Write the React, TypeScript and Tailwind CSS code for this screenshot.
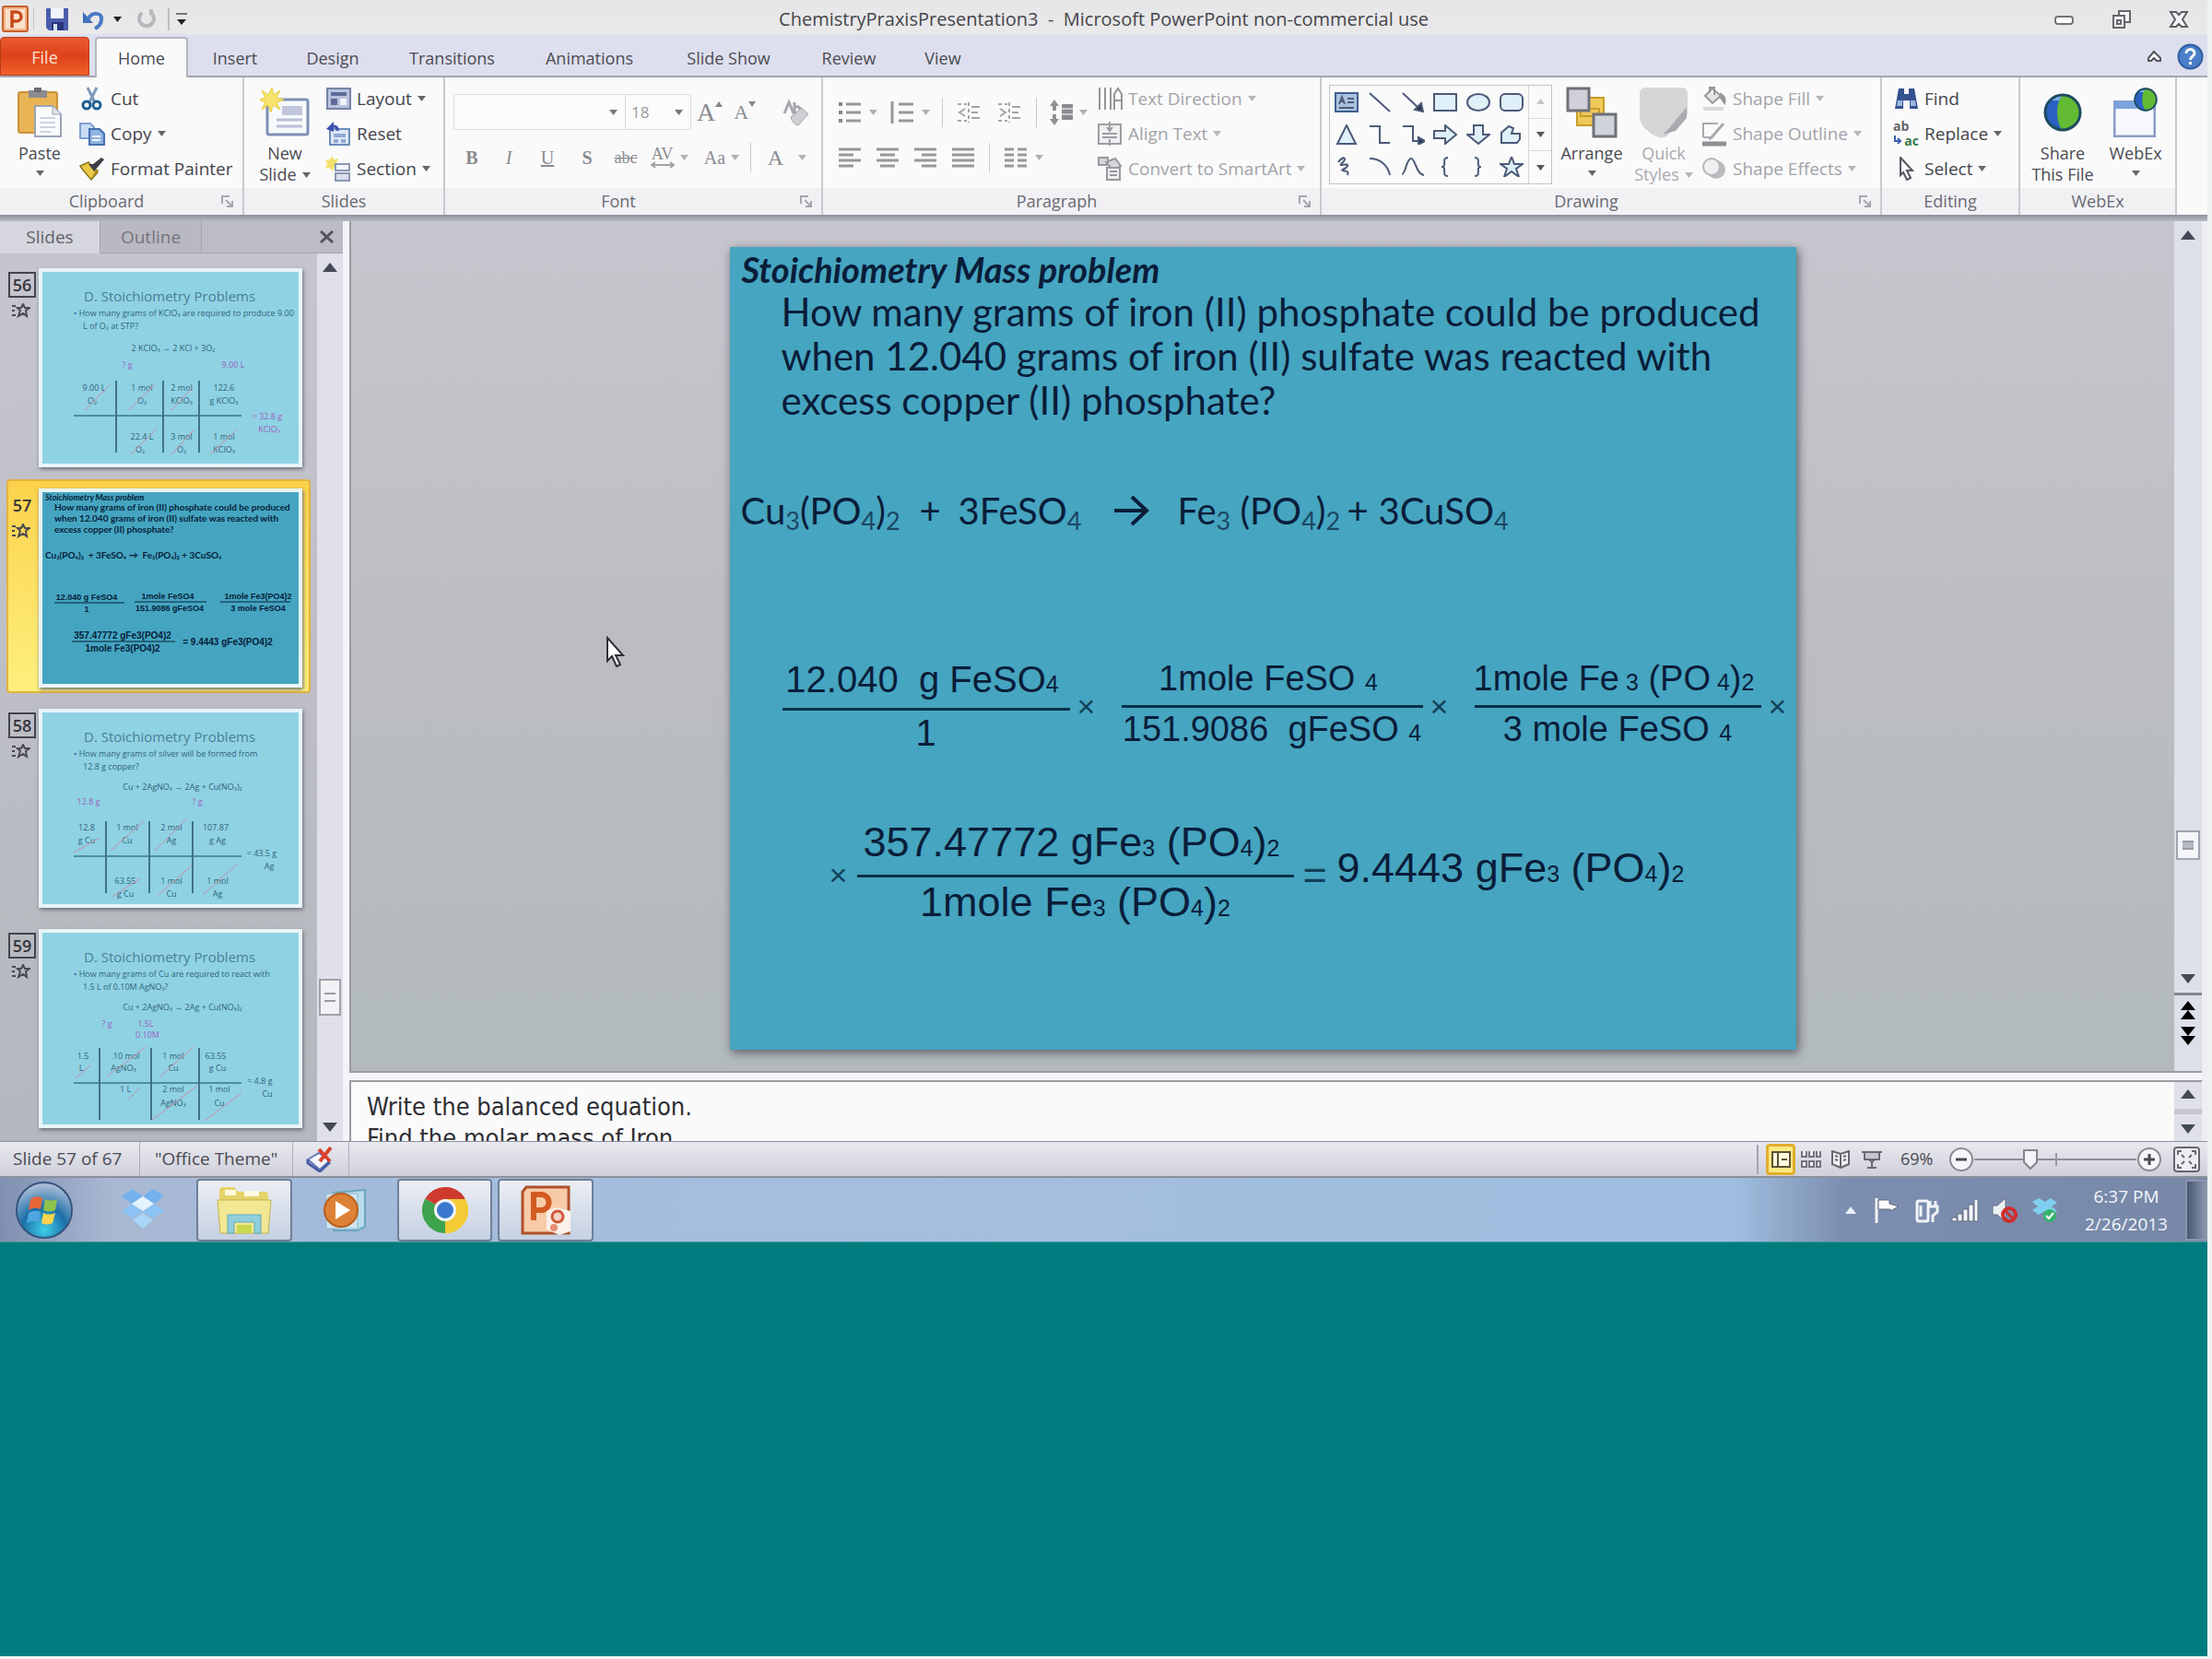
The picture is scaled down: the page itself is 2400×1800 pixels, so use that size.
import React from "react";

type Kids = { children?: React.ReactNode };

/* ---------- small shared pieces ---------- */

function Caret({ className = "text-[#555]" }: { className?: string }) {
  return (
    <svg width="9" height="6" viewBox="0 0 9 6" className={className} aria-hidden="true">
      <path d="M0 0h9L4.5 6z" fill="currentColor" />
    </svg>
  );
}

function Tri({ down = false, className = "text-[#444a55]" }: { down?: boolean; className?: string }) {
  return (
    <svg width="16" height="10" viewBox="0 0 16 10" className={className} aria-hidden="true">
      <path d={down ? "M0 0h16L8 10z" : "M0 10h16L8 0z"} fill="currentColor" />
    </svg>
  );
}

function Sep() {
  return <span className="h-8 w-px bg-[#c9c9cf]" />;
}

function Group({ label, width, children, launcher = false }: Kids & { label: string; width: string; launcher?: boolean }) {
  return (
    <section aria-label={label} className={`flex flex-col border-r-2 border-[#c9c9ce] ${width}`}>
      <div className="flex h-[120px] pt-1">{children}</div>
      <div className="flex h-[29px] items-center bg-[#f1f1f4]">
        <span className="flex-1 text-center text-[18px] text-[#6a6a72]">{label}</span>
        {launcher && (
          <button aria-label={`${label} options`} className="flex w-8 justify-center">
            <svg width="14" height="14" viewBox="0 0 14 14" fill="none" stroke="#a6a6ae" strokeWidth="2">
              <path d="M1 9V1h8M5 5l6 6M12 6v6H6" />
            </svg>
          </button>
        )}
      </div>
    </section>
  );
}

function SmallButton({ icon, label, caret = false, muted = false }: { icon: React.ReactNode; label: string; caret?: boolean; muted?: boolean }) {
  return (
    <button className={`flex h-[38px] items-center gap-1.5 whitespace-nowrap text-[19px] ${muted ? "text-[#a3a3a8]" : "text-[#45454b]"}`}>
      <span className="flex w-7 justify-center">{icon}</span>
      {label}
      {caret && <Caret className={muted ? "text-[#b5b5ba]" : "text-[#66666c]"} />}
    </button>
  );
}

function BigButton({ icon, lines, caret, width, muted = false }: { icon: React.ReactNode; lines: string[]; caret: "below" | "inline" | "none"; width: string; muted?: boolean }) {
  return (
    <button className={`flex flex-col items-center text-[18px] leading-[23px] ${width} ${muted ? "text-[#a9a9ae]" : "text-[#4b4b51]"}`}>
      <span className="flex h-[67px] items-center justify-center">{icon}</span>
      {lines.map((l, i) => (
        <span key={l} className="flex items-center gap-1.5 whitespace-nowrap">
          {l}
          {caret === "inline" && i === lines.length - 1 && <Caret className={muted ? "text-[#b5b5ba]" : "text-[#66666c]"} />}
        </span>
      ))}
      {caret === "below" && <span className="flex h-5 items-center"><Caret className="text-[#66666c]" /></span>}
    </button>
  );
}

/* ---------- title bar ---------- */

function TitleBar() {
  return (
    <header className="flex h-[37px] items-center bg-gradient-to-b from-[#e6e6e8] to-[#e9e9ea] pt-1">
      <div className="flex w-[228px] items-center pl-0.5 text-[#222]">
        <svg width="30" height="30" viewBox="0 0 30 30" aria-hidden="true">
          <rect x="1" y="1" width="27" height="27" rx="2" fill="#f3b48c" stroke="#c9602b" strokeWidth="2" />
          <rect x="4" y="4" width="21" height="21" fill="#fbe0cc" />
          <path d="M11 24V7h5a5 5 0 0 1 0 10h-5" fill="none" stroke="#c74a1c" strokeWidth="3.5" />
        </svg>
        <span className="ml-1 h-6 w-px bg-[#c4c4c8]" />
        <button aria-label="Save" className="ml-3">
          <svg width="26" height="26" viewBox="0 0 26 26">
            <path d="M1 1h24v24H4l-3-3z" fill="#4b5cab" />
            <rect x="6" y="1" width="14" height="11" fill="#eef3fb" />
            <rect x="7" y="16" width="13" height="9" fill="#28367c" />
            <rect x="9" y="18" width="4" height="7" fill="#d5e0f2" />
          </svg>
        </button>
        <button aria-label="Undo" className="ml-3.5">
          <svg width="26" height="24" viewBox="0 0 26 24" fill="none">
            <path d="M7 11C11 4 22 4 21 12c0 5-3 8-7 10" stroke="#4a79c4" strokeWidth="4" />
            <path d="M1 4v12h11z" fill="#3f6fbd" />
          </svg>
        </button>
        <button aria-label="Undo list" className="ml-2"><Caret className="text-[#222]" /></button>
        <button aria-label="Redo" className="ml-4">
          <svg width="22" height="24" viewBox="0 0 22 24" fill="none" stroke="#b9b9bd" strokeWidth="4">
            <path d="M6 5a8 8 0 1 0 10 0M16 1v6" />
          </svg>
        </button>
        <span className="ml-3 h-6 w-0.5 bg-[#bdbdc1]" />
        <button aria-label="Customize toolbar" className="ml-1.5">
          <svg width="14" height="16" viewBox="0 0 14 16"><path d="M1 2h12" stroke="#777" strokeWidth="2" /><path d="M2 8h10l-5 6z" fill="#222" /></svg>
        </button>
      </div>
      <h1 className="flex-1 whitespace-nowrap text-center text-[20px] leading-6 text-[#45454a]">
        ChemistryPraxisPresentation3&nbsp; -&nbsp; Microsoft PowerPoint non-commercial use
      </h1>
      <div className="flex w-[228px] items-center justify-end gap-10 pr-5">
        <button aria-label="Minimize">
          <svg width="22" height="12" viewBox="0 0 22 12"><rect x="1" y="3" width="19" height="8" rx="3" fill="#fff" stroke="#74747a" strokeWidth="2" /></svg>
        </button>
        <button aria-label="Restore">
          <svg width="22" height="22" viewBox="0 0 22 22" fill="#f4f4f6" stroke="#66666c" strokeWidth="2">
            <rect x="8" y="2" width="12" height="12" /><rect x="2" y="7" width="12" height="13" /><path d="M6 12h4v4H6z" />
          </svg>
        </button>
        <button aria-label="Close">
          <svg width="22" height="20" viewBox="0 0 22 20" fill="#f6f6f8" stroke="#5d5d64" strokeWidth="2">
            <path d="M2 2h6l3 3 3-3h6l-5 8 5 8h-6l-3-3-3 3H2l5-8z" />
          </svg>
        </button>
      </div>
    </header>
  );
}

/* ---------- ribbon tabs ---------- */

const tabs = [
  { t: "Insert", w: "w-[102px]" },
  { t: "Design", w: "w-[110px]" },
  { t: "Transitions", w: "w-[149px]" },
  { t: "Animations", w: "w-[149px]" },
  { t: "Slide Show", w: "w-[153px]" },
  { t: "Review", w: "w-[108px]" },
  { t: "View", w: "w-[96px]" },
];

function TabBar() {
  return (
    <nav className="flex h-[47px] items-end border-b-2 border-[#a3a6b0] bg-[#dedfee] text-[18px] text-[#4b4b52]">
      <button className="h-[42px] w-[97px] rounded-t-sm border border-[#b93a14] bg-gradient-to-b from-[#ea5a33] via-[#dd4118] to-[#f0602c] pt-0.5 text-[#ffe3d8]">File</button>
      <button className="-mb-0.5 ml-1.5 h-11 w-[101px] rounded-t border-2 border-b-0 border-[#b4b6c0] bg-[#fafafb]">Home</button>
      {tabs.map((x) => (
        <button key={x.t} className={`h-[42px] whitespace-nowrap pt-1 ${x.w}`}>{x.t}</button>
      ))}
      <span className="flex-1" />
      <div className="flex h-[42px] items-center gap-4 pr-1">
        <button aria-label="Collapse ribbon">
          <svg width="17" height="14" viewBox="0 0 17 14" fill="#fff" stroke="#55555c" strokeWidth="2"><path d="M2 9l6-7 7 7v3h-4l-3-3-3 3H2z" /></svg>
        </button>
        <button aria-label="Help">
          <svg width="29" height="29" viewBox="0 0 29 29">
            <circle cx="14.5" cy="14.5" r="13" fill="#4a7fc8" stroke="#2f5da0" strokeWidth="2" />
            <path d="M10 11c0-6 9-6 9 0 0 3-4.500 3-4.500 7M14.500 20v3" fill="none" stroke="#fff" strokeWidth="3" />
          </svg>
        </button>
      </div>
    </nav>
  );
}

/* ---------- ribbon icons ---------- */

const PasteIcon = () => (
  <svg width="48" height="54" viewBox="0 0 48 54">
    <rect x="1" y="5" width="42" height="44" rx="2" fill="#e9b454" stroke="#c9923a" strokeWidth="2" />
    <path d="M12 3h20v8H12z" fill="#8b8b90" /><path d="M18 0h8v5h-8z" fill="#6d6d73" />
    <path d="M19 20h19l9 9v24H19z" fill="#fafbfd" stroke="#9aa3b8" strokeWidth="2" />
    <path d="M38 20v9h9" fill="#dfe4ee" stroke="#9aa3b8" /><path d="M24 33h17M24 38h17M24 43h17M24 48h12" stroke="#cdd3df" strokeWidth="2" />
  </svg>
);
const CutIcon = () => (
  <svg width="24" height="26" viewBox="0 0 24 26" fill="none">
    <path d="M7 1l8 16M17 1L9 17" stroke="#7d9bb8" strokeWidth="3" />
    <circle cx="6" cy="20" r="4" stroke="#1d5f93" strokeWidth="3" /><circle cx="17" cy="20" r="4" stroke="#1d5f93" strokeWidth="3" />
  </svg>
);
const CopyIcon = () => (
  <svg width="28" height="26" viewBox="0 0 28 26">
    <path d="M1 2h11l4 4v12H1z" fill="#c9dcf3" stroke="#7da0cf" strokeWidth="2" />
    <path d="M11 8h11l5 5v12H11z" fill="#8fb4e2" stroke="#456fae" strokeWidth="2" /><path d="M14 16h9M14 20h9" stroke="#eef4fc" strokeWidth="2" />
  </svg>
);
const PainterIcon = () => (
  <svg width="28" height="26" viewBox="0 0 28 26">
    <path d="M1 10l9-4 10 11-7 8C9 20 4 15 1 10z" fill="#ecc945" stroke="#8b7a22" strokeWidth="1.500" />
    <path d="M10 8l6 8L27 3l-3-2-9 7z" fill="#3d3f46" /><path d="M13 24l8-9-2-2" fill="#a38315" />
  </svg>
);
const NewSlideIcon = () => (
  <svg width="54" height="54" viewBox="0 0 54 54">
    <rect x="8" y="13" width="44" height="38" rx="2" fill="#f7f9fd" stroke="#7f90b4" strokeWidth="3" />
    <path d="M24 20h22v10H24z" fill="#c0c7dc" /><path d="M18 35h28M18 42h28" stroke="#b8c0d6" strokeWidth="3" />
    <path d="M13 0l2 8 7-5-4 8 8 2-8 3 4 8-8-5-2 8-3-8-7 5 4-8-7-3 7-2-4-8 7 5z" fill="#f6e56a" stroke="#e5cd3f" />
  </svg>
);
const LayoutIcon = () => (
  <svg width="27" height="24" viewBox="0 0 27 24"><rect x="1" y="1" width="25" height="22" fill="#b9c2dc" stroke="#7683a8" strokeWidth="2" /><path d="M5 5h17v4H5zM5 12h7v7H5z" fill="#5c6b99" /><path d="M15 12h7v7h-7z" fill="#f0f3fa" /></svg>
);
const ResetIcon = () => (
  <svg width="28" height="26" viewBox="0 0 28 26"><rect x="5" y="8" width="21" height="17" fill="#dde7f4" stroke="#6d8cbb" strokeWidth="2" /><path d="M9 13h13v4H9zM9 19h5v4H9zM17 19h5v4h-5z" fill="#8fa9d2" /><path d="M13 10C14 5 9 4 6 6" fill="none" stroke="#3f4fae" strokeWidth="3" /><path d="M1 8l8-8v11z" fill="#3f4fae" /></svg>
);
const SectionIcon = () => (
  <svg width="28" height="28" viewBox="0 0 28 28"><path d="M7 0l2 4 5-1-2 5 3 3-5 1-2 5-3-4-5 1 2-5-2-4 5-1z" fill="#f4e16a" /><rect x="11" y="9" width="15" height="7" fill="#f4f6fa" stroke="#8b97b3" strokeWidth="2" /><rect x="11" y="19" width="15" height="8" fill="#d9dfec" stroke="#8b97b3" strokeWidth="2" /></svg>
);
function Lines({ rows, dot = false }: { rows: string; dot?: boolean }) {
  return (
    <svg width="26" height="24" viewBox="0 0 26 24" aria-hidden="true">
      {dot && <path d="M1 3h4M1 12h4M1 21h4" stroke="#85858b" strokeWidth="4" />}
      <path d={rows} stroke="#97979c" strokeWidth="3" fill="none" />
    </svg>
  );
}
const Dent = ({ flip = false }: { flip?: boolean }) => (
  <svg width="30" height="26" viewBox="0 0 30 26" fill="none" stroke="#a5a5aa" strokeWidth="2">
    <path d="M2 4h10M2 22h10M14 2v22" strokeDasharray="4 3" />
    <path d={flip ? "M4 9l6 4-6 4M17 7h9M17 13h7M17 19h9" : "M10 9l-6 4 6 4M17 7h9M17 13h7M17 19h9"} />
  </svg>
);
const TextDirIcon = () => (
  <svg width="27" height="26" viewBox="0 0 27 26" fill="none" stroke="#95959a" strokeWidth="2"><path d="M2 1v24M8 1v24M14 1v24" /><path d="M18 25V8l4-6 4 6v17M18 15h8" /></svg>
);
const AlignTextIcon = () => (
  <svg width="27" height="26" viewBox="0 0 27 26" fill="#f0f0f2" stroke="#9d9da2" strokeWidth="2"><rect x="1" y="3" width="24" height="21" /><path d="M13 0v9M10 6l3 4 3-4M5 13h16M5 17h16M13 26v-7" /></svg>
);
const SmartArtIcon = () => (
  <svg width="28" height="28" viewBox="0 0 28 28" fill="#d6d6da" stroke="#98989e" strokeWidth="2"><path d="M2 2h10v8H2zM10 7l10-4 6 8-8 5z" /><rect x="11" y="13" width="14" height="13" fill="#efeff1" /><path d="M14 17h8M14 21h8" /></svg>
);

const shapes: React.ReactNode[] = [
  <g key="0"><rect x="1" y="1" width="24" height="20" fill="#a9c2df" stroke="#3f5f8c" strokeWidth="2" /><path d="M5 13l3-8 3 8M6 10h4M14 7h7M14 11h7M5 17h16" /></g>,
  <path key="1" d="M2 1l22 20" />,
  <g key="2"><path d="M2 1l18 17" /><path d="M24 21l-9-2 7-7z" fill="#26324a" /></g>,
  <rect key="3" x="1" y="2" width="24" height="18" fill="#dff0f8" />,
  <ellipse key="4" cx="13" cy="11" rx="12" ry="9" fill="#dff0f8" />,
  <rect key="5" x="1" y="2" width="24" height="18" rx="5" fill="#dff0f8" />,
  <path key="6" d="M13 1l10 20H3z" fill="#dff0f8" />,
  <path key="7" d="M2 2h11v18h11" />,
  <g key="8"><path d="M2 2h11v16h9" /><path d="M26 18l-7-4v8z" fill="#26324a" /></g>,
  <path key="9" d="M1 7h12V1l12 10-12 10v-6H1z" fill="#dff0f8" />,
  <path key="10" d="M8 1h10v10h7L13 21 1 11h7z" fill="#dff0f8" />,
  <path key="11" d="M2 20V9l8-7 5 2-2 6h9v6l-3 4z" fill="#dff0f8" />,
  <path key="12" d="M4 6c6-8 10-4 4 1s8-1 6 3-8 4-5 5 7 0 5 5" />,
  <path key="13" d="M2 2c12 0 20 8 22 18" />,
  <path key="14" d="M1 19C5 19 6 2 11 2s5 17 14 18" />,
  <path key="15" d="M16 1c-8 0 0 10-7 10 7 0-1 10 7 10" />,
  <path key="16" d="M9 1c8 0 0 10 7 10-7 0 1 10-7 10" />,
  <path key="17" d="M13 0l3 8h9l-7 5 3 9-8-6-8 6 3-9-7-5h9z" fill="#dff0f8" />,
];

const ArrangeIcon = () => (
  <svg width="56" height="56" viewBox="0 0 56 56"><path d="M16 12h25v20H16zM12 24h24v18H12z" fill="#f0c95b" stroke="#c79c2a" strokeWidth="2" /><rect x="2" y="2" width="23" height="24" fill="#cfd0d8" stroke="#6f7078" strokeWidth="3" /><rect x="30" y="30" width="24" height="24" fill="#cfd3da" stroke="#6f7078" strokeWidth="3" /></svg>
);
const QuickIcon = () => (
  <svg width="54" height="56" viewBox="0 0 54 56"><path d="M8 1h38q7 0 7 7v22L30 54q-10 4-20-6-8-6-9-14V8q0-7 7-7z" fill="#d5d5d8" /><path d="M52 22L34 44l-8 8 14-4 12-14z" fill="#aaaaae" /></svg>
);
const FillIcon = () => (
  <svg width="28" height="28" viewBox="0 0 28 28" fill="#e3e3e6" stroke="#98989d" strokeWidth="2"><path d="M12 3L4 11l8 8 9-8zM9 8V2h5v8" /><path d="M21 9q6 3 4 10l-4-6z" fill="#8d8d92" /><path d="M2 25h22" stroke="#dadade" strokeWidth="4" /></svg>
);
const OutlineIcon = () => (
  <svg width="28" height="28" viewBox="0 0 28 28" fill="none" stroke="#a9a9ae" strokeWidth="2"><path d="M2 18V3h16M2 18h10" /><path d="M24 3L11 18l-3 2" strokeWidth="3" /><path d="M1 25h26" stroke="#909095" strokeWidth="5" /></svg>
);
const EffectsIcon = () => (
  <svg width="26" height="24" viewBox="0 0 26 24"><circle cx="15" cy="13" r="10" fill="#bcbcc0" /><circle cx="10" cy="10" r="9" fill="#efeff1" stroke="#b5b5ba" strokeWidth="2" /></svg>
);
const FindIcon = () => (
  <svg width="27" height="24" viewBox="0 0 27 24" fill="#34518f"><path d="M5 1h6v6h5V1h6l4 22h-9v-9h-7v9H1z" /><path d="M4 14h5v6H3zM18 14h5l1 6h-6z" fill="#9db6df" /></svg>
);
const ReplaceIcon = () => (
  <span className="flex h-8 w-7 flex-col text-[14px] font-bold leading-4">
    <span className="text-left text-[#64646a]">ab</span>
    <span className="flex items-center justify-between text-[#3b7a4a]">
      <svg width="10" height="12" viewBox="0 0 10 12" fill="none" stroke="#3a5fae" strokeWidth="2"><path d="M2 0v6h6M5 3l3 3-3 3" /></svg>
      ac
    </span>
  </span>
);
const SelectIcon = () => (
  <svg width="17" height="26" viewBox="0 0 17 26"><path d="M2 1l13 14H9l4 8-4 2-4-8-3 3z" fill="#fff" stroke="#55565e" strokeWidth="2" /></svg>
);
const Globe = ({ s }: { s: string }) => (
  <svg className={s} viewBox="0 0 42 42"><circle cx="21" cy="21" r="20" fill="#2a61c2" /><path d="M21 1c-8 10-8 30 0 40C46 40 46 2 21 1z" fill="#62bb33" /><path d="M9 8q6-6 12-6l-4 6z" fill="#7bb0ea" /><circle cx="21" cy="21" r="19" fill="none" stroke="#1f4c62" strokeWidth="3" /></svg>
);
const WebexIcon = () => (
  <span className="relative flex h-[54px] w-12 items-end">
    <svg width="46" height="40" viewBox="0 0 46 40"><rect x="1" y="1" width="44" height="38" fill="#f8f9fc" stroke="#8a9cc2" strokeWidth="3" /><path d="M1 1h44v8H1z" fill="#7ba3dc" /></svg>
    <span className="absolute right-0 top-0 flex"><Globe s="h-[26px] w-[26px]" /></span>
  </span>
);

/* ---------- ribbon ---------- */

function FontGroup() {
  const btn = "flex h-8 items-center justify-center gap-1.5";
  return (
    <Group label="Font" width="w-[410px]" launcher>
      <div className="flex flex-col pl-[9px] font-['Liberation_Serif'] text-[#8b8b90]">
        <div className="mt-3.5 flex h-[39px] items-center">
          <div className="flex h-full border border-[#dddde0] bg-[#fbfbfb] font-['Open_Sans']">
            <label className="relative flex items-center border-r border-[#dddde0]">
              <select aria-label="Font name" className="h-full w-[185px] appearance-none bg-transparent"><option value=""></option></select>
              <span className="pointer-events-none absolute right-2"><Caret className="text-[#77777c]" /></span>
            </label>
            <label className="relative flex items-center">
              <select aria-label="Font size" className="h-full w-[70px] appearance-none bg-transparent pl-1.5 text-[17px] text-[#9a9a9f]"><option>18</option></select>
              <span className="pointer-events-none absolute right-2"><Caret className="text-[#77777c]" /></span>
            </label>
          </div>
          <button aria-label="Grow font" className="ml-1.5 flex items-start text-[28px] leading-7">A<span className="pt-0.5"><svg width="8" height="6" viewBox="0 0 8 6"><path d="M0 6h8L4 0z" fill="#85858a" /></svg></span></button>
          <button aria-label="Shrink font" className="ml-3 flex items-start text-[22px] leading-7">A<span className="pt-0.5"><svg width="8" height="6" viewBox="0 0 8 6"><path d="M0 0h8L4 6z" fill="#85858a" /></svg></span></button>
          <span className="ml-4 mr-3"><Sep /></span>
          <button aria-label="Clear formatting">
            <svg width="30" height="30" viewBox="0 0 30 30"><path d="M3 16L8 4l5 12M14 4v12q8 0 6-5-1-3-6-2" fill="none" stroke="#a7a7ac" strokeWidth="3" /><path d="M10 20l12-10 7 7-11 12q-6-1-8-9z" fill="#cfcfd3" stroke="#a9a9ae" /></svg>
          </button>
        </div>
        <div className="mt-3.5 flex items-center text-[20px]">
          <button className={`${btn} w-[40px] font-bold`}>B</button>
          <button className={`${btn} w-[40px] italic`}>I</button>
          <button className={`${btn} w-[44px] underline`}>U</button>
          <button className={`${btn} w-[42px] font-bold`}>S</button>
          <button className={`${btn} w-[42px] text-[18px] line-through`}>abc</button>
          <button className={`${btn} w-[52px] text-[18px]`} aria-label="AV character spacing">
            <span className="flex flex-col items-center leading-4">AV
              <svg width="26" height="8" viewBox="0 0 26 8" fill="none" stroke="#a1a1a6" strokeWidth="2"><path d="M1 4h24M5 1L1 4l4 3M21 1l4 3-4 3" /></svg>
            </span>
            <Caret className="text-[#b0b0b5]" />
          </button>
          <button className={`${btn} w-[62px]`}>Aa<Caret className="text-[#b0b0b5]" /></button>
          <Sep />
          <button className={`${btn} w-[78px] gap-4 text-[24px]`}>A<Caret className="text-[#b0b0b5]" /></button>
        </div>
      </div>
    </Group>
  );
}

function ParagraphGroup() {
  const c = <Caret className="text-[#b0b0b5]" />;
  return (
    <Group label="Paragraph" width="w-[541px]" launcher>
      <div className="flex w-[287px] flex-col pl-4">
        <div className="mt-3.5 flex h-[39px] items-center justify-between">
          <button aria-label="Bullets" className="flex items-center gap-2"><Lines dot rows="M9 3h16M9 12h16M9 21h16" />{c}</button>
          <button aria-label="Numbering" className="flex items-center gap-2"><Lines rows="M2 0v24M9 3h16M9 12h16M9 21h16" />{c}</button>
          <Sep />
          <button aria-label="Decrease indent"><Dent /></button>
          <button aria-label="Increase indent"><Dent flip /></button>
          <Sep />
          <button aria-label="Line spacing" className="flex items-center gap-1.5">
            <svg width="26" height="28" viewBox="0 0 26 28"><path d="M5 0l5 7H7v5H3V7H0zM5 28l5-7H7v-5H3v5H0z" fill="#8f8f94" /><rect x="13" y="5" width="12" height="17" fill="#8b8b90" /><path d="M13 10h12M13 16h12" stroke="#c9c9cd" strokeWidth="2" /></svg>
            {c}
          </button>
        </div>
        <div className="mt-3.5 flex h-8 items-center gap-[15px]">
          <button aria-label="Align left"><Lines rows="M1 3h24M1 9h16M1 15h24M1 21h16" /></button>
          <button aria-label="Center"><Lines rows="M1 3h24M5 9h16M1 15h24M5 21h16" /></button>
          <button aria-label="Align right"><Lines rows="M1 3h24M9 9h16M1 15h24M9 21h16" /></button>
          <button aria-label="Justify"><Lines rows="M1 3h24M1 9h24M1 15h24M1 21h24" /></button>
          <Sep />
          <button aria-label="Columns" className="flex items-center gap-2"><Lines rows="M1 3h10M1 9h10M1 15h10M1 21h10M15 3h10M15 9h10M15 15h10M15 21h10" />{c}</button>
        </div>
      </div>
      <div className="pl-2.5">
        <SmallButton icon={<TextDirIcon />} label="Text Direction" caret muted />
        <SmallButton icon={<AlignTextIcon />} label="Align Text" caret muted />
        <SmallButton icon={<SmartArtIcon />} label="Convert to SmartArt" caret muted />
      </div>
    </Group>
  );
}

function DrawingGroup() {
  return (
    <Group label="Drawing" width="w-[608px]" launcher>
      <div className="ml-2 mt-1 flex h-[108px] w-[242px] border border-[#c2c2c8] bg-[#fafafa]">
        <div className="grid flex-1 grid-cols-6 grid-rows-3 place-items-center">
          {shapes.map((s, i) => (
            <button key={i} aria-label={`Shape ${i + 1}`}>
              <svg width="26" height="22" viewBox="0 0 26 22" fill="none" stroke="#4c5a78" strokeWidth="2">{s}</svg>
            </button>
          ))}
        </div>
        <div className="flex w-[25px] flex-col border-l border-[#d4d4d9]">
          <button aria-label="Previous row" className="flex flex-1 items-center justify-center"><svg width="9" height="6" viewBox="0 0 9 6"><path d="M0 6h9L4.500 0z" fill="#c5c5c9" /></svg></button>
          <button aria-label="Next row" className="flex flex-1 items-center justify-center border-y border-[#dadade]"><Caret /></button>
          <button aria-label="More shapes" className="flex flex-1 items-center justify-center"><Caret /></button>
        </div>
      </div>
      <BigButton icon={<ArrangeIcon />} lines={["Arrange"]} caret="below" width="w-[86px]" />
      <BigButton icon={<QuickIcon />} lines={["Quick", "Styles"]} caret="inline" width="w-[70px]" muted />
      <div className="pl-1.5">
        <SmallButton icon={<FillIcon />} label="Shape Fill" caret muted />
        <SmallButton icon={<OutlineIcon />} label="Shape Outline" caret muted />
        <SmallButton icon={<EffectsIcon />} label="Shape Effects" caret muted />
      </div>
    </Group>
  );
}

function Ribbon() {
  return (
    <div className="flex bg-[#fafafb]">
      <Group label="Clipboard" width="w-[265px]" launcher>
        <BigButton icon={<PasteIcon />} lines={["Paste"]} caret="below" width="w-[86px]" />
        <div>
          <SmallButton icon={<CutIcon />} label="Cut" />
          <SmallButton icon={<CopyIcon />} label="Copy" caret />
          <SmallButton icon={<PainterIcon />} label="Format Painter" />
        </div>
      </Group>
      <Group label="Slides" width="w-[218px]">
        <BigButton icon={<NewSlideIcon />} lines={["New", "Slide"]} caret="inline" width="w-[88px]" />
        <div>
          <SmallButton icon={<LayoutIcon />} label="Layout" caret />
          <SmallButton icon={<ResetIcon />} label="Reset" />
          <SmallButton icon={<SectionIcon />} label="Section" caret />
        </div>
      </Group>
      <FontGroup />
      <ParagraphGroup />
      <DrawingGroup />
      <Group label="Editing" width="w-[150px]">
        <div className="pl-3">
          <SmallButton icon={<FindIcon />} label="Find" />
          <SmallButton icon={<ReplaceIcon />} label="Replace" caret />
          <SmallButton icon={<SelectIcon />} label="Select" caret />
        </div>
      </Group>
      <Group label="WebEx" width="w-[170px]">
        <BigButton icon={<Globe s="h-[42px] w-[42px]" />} lines={["Share", "This File"]} caret="none" width="w-[92px]" />
        <BigButton icon={<WebexIcon />} lines={["WebEx"]} caret="below" width="w-[66px]" />
      </Group>
      <div className="flex-1" />
    </div>
  );
}

/* ---------- slide thumbnails ---------- */

type Item = [x: number, y: number, text: string, fill?: string];

function ProblemThumb({ title, bullets, items, verticals, hLine, strikes }: { title: string; bullets: string[]; items: Item[]; verticals: number[]; hLine: number; strikes: string }) {
  return (
    <svg viewBox="0 0 278 208" className="block w-full bg-[#8fd2e4]" fontFamily="Open Sans, sans-serif" role="img" aria-label={title}>
      <text x="45" y="32" fontSize="15" fill="#4b7f93">{title}</text>
      <text x="34" y="48" fontSize="9" fill="#2f6478">• {bullets[0]}</text>
      <text x="44" y="62" fontSize="9" fill="#2f6478">{bullets[1]}</text>
      {items.map(([x, y, t, f], i) => (
        <text key={i} x={x} y={y} fontSize="9" textAnchor="middle" fill={f ?? "#2f6478"}>{t}</text>
      ))}
      <path d={`M34 ${hLine}h182`} stroke="#4f8da2" strokeWidth="2" />
      {verticals.map((x) => (
        <path key={x} d={`M${x} ${hLine - 38}v78`} stroke="#3f7388" strokeWidth="2" />
      ))}
      <path d={strikes} stroke="#c98fa6" strokeWidth="1" fill="none" />
    </svg>
  );
}

const magenta = "#9a62c0";

function Thumb56() {
  return (
    <ProblemThumb
      title="D. Stoichiometry Problems"
      bullets={["How many grams of KClO₃ are required to produce 9.00", "L of O₂ at STP?"]}
      items={[
        [142, 86, "2 KClO₃ → 2 KCl + 3O₂"], [92, 104, "? g", magenta], [207, 104, "9.00 L", magenta],
        [56, 129, "9.00 L"], [54, 143, "O₂"], [108, 129, "1 mol"], [108, 143, "O₂"], [151, 129, "2 mol"], [151, 143, "KClO₃"], [197, 129, "122.6"], [197, 143, "g KClO₃"],
        [244, 160, "= 32.8 g", magenta], [246, 174, "KClO₃", magenta],
        [108, 182, "22.4 L"], [106, 196, "O₂"], [151, 182, "3 mol"], [151, 196, "O₂"], [197, 182, "1 mol"], [197, 196, "KClO₃"],
      ]}
      verticals={[80, 131, 170]}
      hLine={156}
      strikes="M46 150l28-28M94 150l28-28M96 198l28-28M140 150l24-26M140 198l24-26M182 198l28-26"
    />
  );
}

function Thumb58() {
  return (
    <ProblemThumb
      title="D. Stoichiometry Problems"
      bullets={["How many grams of silver will be formed from", "12.8 g copper?"]}
      items={[
        [152, 84, "Cu + 2AgNO₃ → 2Ag + Cu(NO₃)₂"], [50, 100, "12.8 g", magenta], [168, 100, "? g", magenta],
        [48, 128, "12.8"], [48, 142, "g Cu"], [92, 128, "1 mol"], [92, 142, "Cu"], [140, 128, "2 mol"], [140, 142, "Ag"], [188, 128, "107.87"], [190, 142, "g Ag"],
        [238, 156, "= 43.5 g"], [246, 170, "Ag"],
        [90, 186, "63.55"], [90, 200, "g Cu"], [140, 186, "1 mol"], [140, 200, "Cu"], [190, 186, "1 mol"], [190, 200, "Ag"],
      ]}
      verticals={[69, 116, 163]}
      hLine={156}
      strikes="M34 152l28-16M74 150l36-32M122 150l34-34M76 200l30-20M126 198l36-32M174 198l38-34"
    />
  );
}

function Thumb59() {
  return (
    <ProblemThumb
      title="D. Stoichiometry Problems"
      bullets={["How many grams of Cu are required to react with", "1.5 L of 0.10M AgNO₃?"]}
      items={[
        [152, 84, "Cu + 2AgNO₃ → 2Ag + Cu(NO₃)₂"], [70, 102, "? g", magenta], [112, 102, "1.5L", magenta], [114, 114, "0.10M", magenta],
        [44, 137, "1.5"], [42, 150, "L"], [90, 137, ".10 mol"], [88, 150, "AgNO₃"], [142, 137, "1 mol"], [142, 150, "Cu"], [188, 137, "63.55"], [190, 150, "g Cu"],
        [236, 164, "= 4.8 g"], [244, 178, "Cu"],
        [90, 173, "1 L"], [142, 173, "2 mol"], [142, 188, "AgNO₃"], [192, 173, "1 mol"], [192, 188, "Cu"],
      ]}
      verticals={[62, 118, 170]}
      hLine={163}
      strikes="M36 158l16-14M70 156l42-32M128 156l36-32M92 182l14-14M118 204l50-38M176 204l40-30"
    />
  );
}

function Thumb57() {
  return (
    <svg viewBox="0 0 278 208" className="block w-full bg-[#45a5c0]" fontFamily="Lato, sans-serif" fill="#05203a" fontWeight="700" role="img" aria-label="Stoichiometry Mass problem">
      <text x="3" y="9" fontSize="9" fontStyle="italic">Stoichiometry Mass problem</text>
      <g fontSize="10">
        <text x="13" y="20">How many grams of iron (II) phosphate could be produced</text>
        <text x="13" y="32">when 12.040 grams of iron (II) sulfate was reacted with</text>
        <text x="13" y="44">excess copper (II) phosphate?</text>
        <text x="3" y="72">Cu₃(PO₄)₂ &nbsp;+ 3FeSO₄ → &nbsp;Fe₃(PO₄)₂ + 3CuSO₄</text>
      </g>
      <g fontSize="9" fontFamily="Liberation Sans, sans-serif" textAnchor="middle">
        <text x="48" y="117">12.040 g FeSO4</text><text x="48" y="130">1</text>
        <text x="136" y="116">1mole FeSO4</text><text x="138" y="129">151.9086 gFeSO4</text>
        <text x="234" y="116">1mole Fe3(PO4)2</text><text x="234" y="129">3 mole FeSO4</text>
        <text x="87" y="159" fontSize="10">357.47772 gFe3(PO4)2</text><text x="87" y="173" fontSize="10">1mole Fe3(PO4)2</text>
        <text x="201" y="166" fontSize="10">= 9.4443 gFe3(PO4)2</text>
      </g>
      <path d="M13 120h76M100 119h78M193 119h76M32 162h112" stroke="#05203a" strokeWidth="1" />
    </svg>
  );
}

const thumbs = [
  { n: 56, body: <Thumb56 /> },
  { n: 57, body: <Thumb57 /> },
  { n: 58, body: <Thumb58 /> },
  { n: 59, body: <Thumb59 /> },
];

function SlidesPanel() {
  return (
    <aside className="flex w-[372px] shrink-0 flex-col bg-[#bfbec6]">
      <div className="flex h-[35px] items-center bg-[#bcbcc6] text-[19px] text-[#62626a]">
        <button className="h-full w-[108px] bg-[#d6d6de]">Slides</button>
        <button className="h-full w-[111px] border-x border-b border-[#a5a5af] bg-[#b9b9c2] text-[#74747d]">Outline</button>
        <span className="h-full flex-1 border-b border-[#a5a5af]" />
        <button aria-label="Close panel" className="h-full border-b border-[#a5a5af] pr-2.5">
          <svg width="15" height="14" viewBox="0 0 15 14" stroke="#55555d" strokeWidth="3"><path d="M1 1l13 12M14 1L1 13" /></svg>
        </button>
      </div>
      <div className="flex flex-1">
        <ol className="flex flex-1 flex-col gap-[7px] bg-gradient-to-b from-[#c6c5ce] to-[#b4b7bd] px-[7px] pb-2 pt-1.5">
          {thumbs.map(({ n, body }) => {
            const on = n === 57;
            return (
              <li key={n} className={on ? "rounded border-2 border-[#e3b23c] bg-gradient-to-b from-[#fbd24a] to-[#fdf07c]" : "border-2 border-transparent"}>
                <button className="flex w-full pb-1 pr-[7px] pt-2" aria-current={on}>
                  <span className="flex w-[33px] flex-col items-start gap-1.5 pt-1 text-[#33333a]">
                    <span className={`flex h-7 w-[30px] items-center justify-center border-2 text-[18px] font-semibold ${on ? "border-transparent" : "border-[#44444c]"}`}>{n}</span>
                    <svg width="20" height="16" viewBox="0 0 20 16" fill="none" stroke="#4a4a52" strokeWidth="2" className="ml-1"><path d="M12 1l2 4h5l-4 3 1 6-4-3-5 3 2-6-3-3h4zM0 3h4M0 8h3M0 13h4" /></svg>
                  </span>
                  <span className="flex-1 border-4 border-[#e8f4f8] shadow-[1px_2px_4px_#6b6b75]">{body}</span>
                </button>
              </li>
            );
          })}
        </ol>
        <div className="flex w-[28px] flex-col items-center bg-[#e0e0ea] py-2.5">
          <button aria-label="Scroll slides up"><Tri /></button>
          <span className="flex-[760]" />
          <span className="flex h-10 w-6 items-center justify-center border-2 border-[#a0a0aa] bg-[#f2f2f6]"><span className="h-2.5 w-3 border-y-2 border-[#9a9aa4]" /></span>
          <span className="flex-[115]" />
          <button aria-label="Scroll slides down"><Tri down /></button>
        </div>
      </div>
    </aside>
  );
}

/* ---------- main slide ---------- */

const S = ({ children }: Kids) => <sub className="text-[27px] text-[#1b4764]">{children}</sub>;
const N = ({ children }: Kids) => <span className="text-[25px]">{children}</span>;

function Fraction({ top, bottom, width, size }: { top: React.ReactNode; bottom: React.ReactNode; width: string; size: string }) {
  return (
    <span className={`flex shrink-0 flex-col items-center whitespace-nowrap ${width} ${size}`}>
      <span className="pr-2">{top}</span>
      <span className="mb-px mt-[3px] h-[3px] w-full bg-[#0b3048]" />
      <span>{bottom}</span>
    </span>
  );
}

const Times = () => <span className="w-14 shrink-0 pl-2 text-[34px] leading-[44px] text-[#12405a]">×</span>;

function MainSlide() {
  return (
    <article className="h-[871px] w-[1157px] overflow-hidden bg-[#46a5c0] font-['Lato'] text-[#0a1d3a] shadow-[2px_3px_10px_#5b5b66]">
      <h2 className="h-[46px] pl-[13px] text-[38px] font-bold italic leading-[48px]">Stoichiometry Mass problem</h2>
      <p className="whitespace-nowrap pl-14 text-[42px] leading-[48px]">
        How many grams of iron (II) phosphate could be produced
        <br />
        when 12.040 grams of iron (II) sulfate was reacted with
        <br />
        excess copper (II) phosphate?
      </p>
      <p className="mt-[72px] flex whitespace-nowrap pl-3 text-[40px] leading-[48px]">
        <span className="w-[194px]">Cu<S>3</S>(PO<S>4</S>)<S>2</S></span>
        <span className="w-[42px]">+</span>
        <span className="w-[168px]">3FeSO<S>4</S></span>
        <span className="flex w-[70px] items-center">
          <svg width="40" height="36" viewBox="0 0 40 36" fill="none" stroke="#0a1d3a" strokeWidth="4" aria-label="yields"><path d="M1 18h34M20 3l16 15-16 15" /></svg>
        </span>
        <span className="w-[184px]">Fe<S>3</S> (PO<S>4</S>)<S>2</S></span>
        <span className="w-[34px]">+</span>
        <span>3CuSO<S>4</S></span>
      </p>
      <div className="mt-[136px] flex items-center pl-[57px] font-['Liberation_Sans']">
        <Fraction width="w-[312px]" size="text-[40px] leading-[46px]" top={<>12.040 &nbsp;g FeSO<N>4</N></>} bottom="1" />
        <Times />
        <Fraction width="w-[327px]" size="text-[38px] leading-[44px]" top={<>1mole FeSO <N>4</N></>} bottom={<>151.9086 &nbsp;gFeSO <N>4</N></>} />
        <Times />
        <Fraction width="w-[311px]" size="text-[38px] leading-[44px]" top={<>1mole Fe<N> 3</N> (PO<N> 4</N>)<N>2</N></>} bottom={<>3 mole FeSO <N>4</N></>} />
        <Times />
      </div>
      <div className="mt-[70px] flex items-center pl-[102px] font-['Liberation_Sans'] text-[45px] leading-[52px]">
        <span className="w-9 pl-1.5 text-[34px] text-[#12405a]">×</span>
        <Fraction width="w-[474px]" size="text-[45px] leading-[52px]" top={<>357.47772 gFe<N>3</N> (PO<N>4</N>)<N>2</N></>} bottom={<>1mole Fe<N>3</N> (PO<N>4</N>)<N>2</N></>} />
        <span className="w-[47px] pl-2.5 text-[#12405a]">=</span>
        <span className="whitespace-nowrap pb-2">9.4443 gFe<N>3</N> (PO<N>4</N>)<N>2</N></span>
      </div>
    </article>
  );
}

function EditorArea() {
  return (
    <main className="flex min-w-0 flex-1 flex-col">
      <div className="flex flex-1 border-b-2 border-l-2 border-[#9b9ba3]">
        <div className="relative flex flex-1 items-center justify-center bg-gradient-to-b from-[#c7c6ce] via-[#bcbdc3] to-[#b2babb] pt-1">
          <MainSlide />
          <svg width="22" height="34" viewBox="0 0 22 34" className="absolute left-[276px] top-[450px]" aria-hidden="true">
            <path d="M2 2l17 19h-8l5 10-4 2-5-11-5 5z" fill="#fff" stroke="#2f3038" strokeWidth="2" />
          </svg>
        </div>
        <div className="flex w-[30px] flex-col items-center bg-[#dddfe9] pt-2.5">
          <button aria-label="Scroll up"><Tri /></button>
          <span className="flex-[645]" />
          <span className="flex h-8 w-[26px] items-center justify-center border-2 border-[#9fa5b0] bg-[#f4f5f9]"><span className="h-2.5 w-3 border-y-2 border-[#9a9aa4] bg-[#b5b8c2]" /></span>
          <span className="flex-[125]" />
          <button aria-label="Scroll down"><Tri down /></button>
          <span className="mb-1.5 mt-2.5 h-[3px] w-full bg-[#85858f]" />
          <button aria-label="Previous slide" className="flex flex-col"><Tri className="text-black" /><Tri className="text-black" /></button>
          <button aria-label="Next slide" className="mb-7 mt-2 flex flex-col"><Tri down className="text-black" /><Tri down className="text-black" /></button>
        </div>
      </div>
      <div className="h-2 bg-[#f4f4f7]" />
      <div className="flex h-[66px] border-l-2 border-t-2 border-[#9b9ba3] bg-[#fafafa]">
        <textarea
          aria-label="Notes"
          defaultValue={"Write the balanced equation.\nFind the molar mass of Iron"}
          className="h-full flex-1 resize-none overflow-hidden bg-transparent pl-[17px] pt-2.5 font-['DejaVu_Sans_Condensed'] text-[27px] leading-[34px] text-[#2e2e33] outline-none"
        />
        <div className="flex w-[30px] flex-col items-center justify-between bg-[#dfe0e9] py-2">
          <button aria-label="Notes up"><Tri /></button>
          <span className="h-1.5 w-full bg-[#c6c6cf]" />
          <button aria-label="Notes down"><Tri down /></button>
        </div>
      </div>
    </main>
  );
}

/* ---------- status bar ---------- */

function StatusBar() {
  return (
    <footer className="flex h-10 items-center border-b-2 border-t border-[#8a909c] bg-gradient-to-b from-[#e9e9f0] to-[#cfd0da] pr-2 text-[19px] text-[#4a4a52]">
      <span className="w-[151px] whitespace-nowrap pl-3.5">Slide 57 of 67</span>
      <span className="h-full w-px bg-[#aeaeb8]" />
      <span className="w-[165px] whitespace-nowrap pl-4">"Office Theme"</span>
      <span className="h-full w-px bg-[#aeaeb8]" />
      <button aria-label="Spelling" className="flex w-[60px] justify-center">
        <svg width="32" height="28" viewBox="0 0 32 28"><path d="M2 14l12-7 12 8-11 10z" fill="#f4f6fb" stroke="#6679b8" strokeWidth="2" /><path d="M2 14v4l13 9 11-10" fill="none" stroke="#4a5da6" strokeWidth="3" /><path d="M14 3l12 13M27 1L15 16" stroke="#d8432f" strokeWidth="4" /></svg>
      </button>
      <span className="h-full w-px bg-[#aeaeb8]" />
      <span className="flex-1" />
      <span className="mr-2 h-8 w-0.5 bg-[#a3a3ad]" />
      <button aria-label="Normal view" className="flex h-[34px] w-8 items-center justify-center rounded border-[3px] border-[#e0ad2b] bg-[#fdea82]">
        <svg width="21" height="18" viewBox="0 0 21 18" fill="#fffbe0" stroke="#5c5132" strokeWidth="2"><rect x="1" y="1" width="19" height="16" /><path d="M7 1v16M11 9h6" /></svg>
      </button>
      <button aria-label="Slide sorter" className="ml-1.5">
        <svg width="22" height="20" viewBox="0 0 22 20" fill="#ededf2" stroke="#74747e" strokeWidth="2"><path d="M1 1v6h5V1M9 1v6h5V1M17 1v6h4V1M1 12h5v6H1zM9 12h5v6H9zM17 12h4v6h-4z" /></svg>
      </button>
      <button aria-label="Reading view" className="ml-2.5">
        <svg width="22" height="20" viewBox="0 0 22 20" fill="#f2f2f6" stroke="#66666f" strokeWidth="2"><path d="M11 4L2 1v14l9 4 9-4V1zM11 4v15M5 6l3 1M5 10l3 1M14 7l3-1M14 11l3-1" /></svg>
      </button>
      <button aria-label="Slide show" className="ml-3">
        <svg width="22" height="20" viewBox="0 0 22 20" fill="#c5c5cd" stroke="#6a6a74" strokeWidth="2"><path d="M0 2h22M3 3v7h16V3M8 10l3 3 3-3M11 12v6M6 19h10" /></svg>
      </button>
      <span className="ml-5 w-[52px] text-[18px]">69%</span>
      <button aria-label="Zoom out">
        <svg width="28" height="28" viewBox="0 0 28 28"><circle cx="14" cy="14" r="12" fill="#f6f6fa" stroke="#8a8a94" strokeWidth="2" /><path d="M8 14h12" stroke="#4a4a52" strokeWidth="3" /></svg>
      </button>
      <label className="relative flex w-[176px] items-center">
        <svg width="176" height="28" viewBox="0 0 176 28" aria-hidden="true"><path d="M0 14h176" stroke="#8d8d97" strokeWidth="2" /><path d="M89 7v14" stroke="#9a9aa4" strokeWidth="2" /><path d="M54 4h14v13l-7 7-7-7z" fill="#f4f4f8" stroke="#85858f" strokeWidth="2" /></svg>
        <input type="range" aria-label="Zoom" min={10} max={400} defaultValue={69} className="absolute inset-0 w-full opacity-0" />
      </label>
      <button aria-label="Zoom in">
        <svg width="28" height="28" viewBox="0 0 28 28"><circle cx="14" cy="14" r="12" fill="#f6f6fa" stroke="#8a8a94" strokeWidth="2" /><path d="M8 14h12M14 8v12" stroke="#4a4a52" strokeWidth="3" /></svg>
      </button>
      <button aria-label="Fit to window" className="ml-3">
        <svg width="29" height="28" viewBox="0 0 29 28" fill="#eeeef2" stroke="#66666f" strokeWidth="2"><rect x="1" y="1" width="27" height="26" rx="3" /><path d="M5 9V5h4M20 5h4v4M24 19v4h-4M9 23H5v-4M9 9l3 3M20 9l-3 3M20 19l-3-3M9 19l3-3" /></svg>
      </button>
    </footer>
  );
}

/* ---------- taskbar ---------- */

function TaskButton({ label, framed = false, width, children }: Kids & { label: string; framed?: boolean; width: string }) {
  return (
    <button aria-label={label} className={`flex h-[68px] items-center justify-center ${width} ${framed ? "rounded border-2 border-[#6f7f97] bg-gradient-to-b from-[#eceff4] to-[#c5d0e2]" : ""}`}>
      {children}
    </button>
  );
}

function Taskbar() {
  return (
    <div className="flex h-[69px] items-center bg-[linear-gradient(90deg,#7e8fb0_0,#a9b8d2_120px,#a3badb_340px,#a6bede_700px,#a0bfe0_1880px,#7c8eb0_2000px,#7788a8_100%)]">
      <TaskButton label="Start" width="w-[96px]">
        <svg width="64" height="64" viewBox="0 0 64 64">
          <defs><radialGradient id="orb" cx="50%" cy="85%" r="80%"><stop offset="0" stopColor="#3fd0ea" /><stop offset=".5" stopColor="#1c6fa8" /><stop offset="1" stopColor="#a9bcd6" /></radialGradient></defs>
          <circle cx="32" cy="32" r="30" fill="url(#orb)" stroke="#35547d" strokeWidth="2" />
          <path d="M17 20q7-5 13-1l-2 12q-7-3-13 1z" fill="#e5683a" /><path d="M33 20q6 3 13 0l-2 12q-6 3-13 0z" fill="#8fc24d" />
          <path d="M15 35q6-4 13-1l-2 11q-6-3-13 1z" fill="#4fa6e0" /><path d="M31 35q6 3 13 0l-3 11q-6 3-12 0z" fill="#f7d34c" />
        </svg>
      </TaskButton>
      <TaskButton label="Dropbox" width="w-[117px]">
        <svg width="50" height="50" viewBox="0 0 50 50"><path d="M14 2l11 8-12 8L2 10zM36 2l12 8-11 8-12-8z" fill="#73b2ee" /><path d="M13 18l12 8-11 8L2 26zM37 18l11 8-12 8-11-8z" fill="#8cc3f4" /><path d="M25 10l12 8-12 8-12-8z" fill="#e4f4fe" /><path d="M14 36l11-8 11 8-11 9z" fill="#a9d6f8" /></svg>
      </TaskButton>
      <TaskButton label="Windows Explorer" framed width="w-[104px]">
        <svg width="60" height="54" viewBox="0 0 60 54"><path d="M3 6q0-4 4-4h12l4 5h30q3 0 3 4v37H3z" fill="#e4d36a" /><path d="M9 5h12v6H9zM30 6h16v6H30z" fill="#fdfae0" /><path d="M1 16h58l-3 36H4z" fill="#f2e793" stroke="#c4b14a" /><path d="M12 52V32h36v20h-7V40H19v12z" fill="#8fd0dc" stroke="#5fa9bb" /><rect x="22" y="43" width="16" height="9" fill="#c9d94e" /></svg>
      </TaskButton>
      <TaskButton label="Media Player" width="w-[114px]">
        <svg width="52" height="48" viewBox="0 0 52 48"><path d="M14 5l34-3v40l-8 4H14z" fill="#b7dcea" stroke="#6ba5be" strokeWidth="2" /><rect x="6" y="6" width="34" height="38" fill="#cfe6f0" stroke="#8db9cc" /><circle cx="22" cy="24" r="18" fill="#dd8136" stroke="#b95f1c" strokeWidth="2" /><path d="M16 14l16 10-16 10z" fill="#fff" /></svg>
      </TaskButton>
      <TaskButton label="Chrome" framed width="w-[103px]">
        <svg width="52" height="52" viewBox="0 0 52 52"><path d="M26 26L4.300 13.500A25 25 0 0 1 47.700 13.500z" fill="#cf3a2f" /><path d="M26 1a25 25 0 0 1 21.700 12.500H26z" fill="#cf3a2f" /><path d="M26 26l21.700-12.500A25 25 0 0 1 26 51z" fill="#f2cb35" /><path d="M26 26L26 51A25 25 0 0 1 4.300 13.500z" fill="#3fa24c" /><path d="M26 14h21.900A25 25 0 0 1 26 51l10-18z" fill="#f2cb35" /><circle cx="26" cy="26" r="12" fill="#f2f4f6" /><circle cx="26" cy="26" r="9" fill="#3a78cf" /></svg>
      </TaskButton>
      <span className="w-1.5" />
      <TaskButton label="PowerPoint" framed width="w-[104px]">
        <svg width="54" height="54" viewBox="0 0 54 54"><path d="M6 2h46v50H2V7z" fill="#f7cba8" stroke="#b0502a" strokeWidth="3" /><path d="M14 38V10h8a8 8 0 0 1 0 17h-8" fill="none" stroke="#d45b21" strokeWidth="6" /><path d="M28 28l10-4 16 4v22l-12 4-14-6z" fill="#fbf1ea" /><circle cx="40" cy="34" r="6" fill="#f3d3c4" stroke="#d0573a" strokeWidth="3" /><circle cx="36" cy="46" r="4" fill="#e58d70" /></svg>
      </TaskButton>
      <span className="flex-1" />
      <div className="flex items-center gap-[13px]">
        <button aria-label="Show hidden icons" className="mr-1.5"><svg width="12" height="8" viewBox="0 0 12 8"><path d="M0 8h12L6 0z" fill="#e9f1fb" /></svg></button>
        <button aria-label="Action center"><svg width="30" height="28" viewBox="0 0 30 28"><path d="M3 1v27" stroke="#f1f3f7" strokeWidth="3" /><path d="M5 3h12v4l10 3-9 5v-2H5z" fill="#fdfdfe" stroke="#5d6677" /></svg></button>
        <button aria-label="Power"><svg width="28" height="28" viewBox="0 0 28 28" fill="none" stroke="#f1f3f7" strokeWidth="3"><rect x="4" y="4" width="12" height="22" rx="2" /><path d="M8 9v12M18 4v6M24 4v6M16 10h10v6l-5 4v7" /></svg></button>
        <button aria-label="Network"><svg width="30" height="26" viewBox="0 0 30 26" fill="#f4f6fa" stroke="#626c80"><path d="M1 21h5v4H1zM7 17h5v8H7zM13 12h5v13h-5zM19 7h5v18h-5zM25 1h4v24h-4z" /></svg></button>
        <button aria-label="Volume muted"><svg width="30" height="28" viewBox="0 0 30 28"><path d="M2 9h5l9-8v26l-9-8H2z" fill="#eceff4" stroke="#626c80" /><circle cx="20" cy="19" r="7" fill="none" stroke="#d02d2d" strokeWidth="4" /><path d="M15 14l10 10" stroke="#d02d2d" strokeWidth="3" /></svg></button>
        <button aria-label="Sync"><svg width="30" height="28" viewBox="0 0 30 28"><path d="M9 1l7 4 6-4 7 5-6 4 6 5-7 4-6-4-7 4-7-5 6-4-6-5z" fill="#7fd0f0" /><circle cx="21" cy="20" r="7" fill="#35b36d" /><path d="M17 20l3 3 5-6" fill="none" stroke="#fff" strokeWidth="2" /></svg></button>
      </div>
      <time className="flex w-[138px] flex-col items-center pl-2.5 text-[19px] leading-[30px] text-[#f4f7fb]"><span>6:37 PM</span><span>2/26/2013</span></time>
      <button aria-label="Show desktop" className="h-[66px] w-6 border-2 border-[#8997ad] bg-gradient-to-r from-[#4b5870] to-[#8796ae]" />
    </div>
  );
}

export default function App() {
  return (
    <div className="flex min-h-screen flex-col border-b-[3px] border-r-[5px] border-[#eef3f3] bg-[#007c7f] font-['Open_Sans',sans-serif]">
      <div className="flex flex-col border-b border-[#3f9a9c]">
        <TitleBar />
        <TabBar />
        <Ribbon />
        <div className="h-[7px] bg-gradient-to-b from-[#8d919c] to-[#b7bac4]" />
        <div className="flex bg-[#eeeef4] pr-1.5">
          <SlidesPanel />
          <div className="w-[7px] shrink-0 bg-[#f3f3f8]" />
          <EditorArea />
        </div>
        <StatusBar />
        <Taskbar />
      </div>
    </div>
  );
}
